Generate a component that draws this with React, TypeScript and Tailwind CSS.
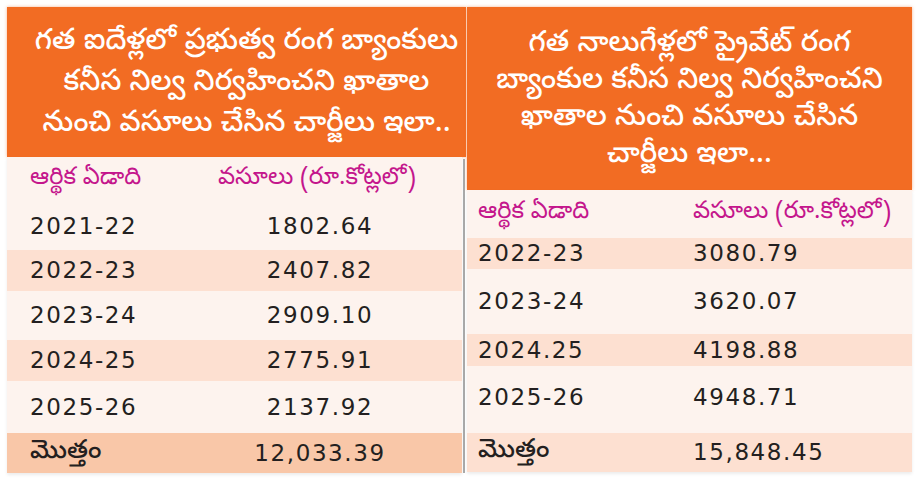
const teluguFont = "font-['Noto_Sans_Telugu','Noto_Sans','Lohit_Telugu','Pothana2000',sans-serif]";
const numFont = "font-['DejaVu_Sans','Noto_Sans_Telugu','Noto_Sans',sans-serif]";

type Row = { year: string; amount: string; h: string; tone: "light" | "peach" | "total" };

const leftRows: Row[] = [
  { year: "2021-22", amount: "1802.64", h: "h-[47px]", tone: "light" },
  { year: "2022-23", amount: "2407.82", h: "h-[41px]", tone: "peach" },
  { year: "2023-24", amount: "2909.10", h: "h-[49px]", tone: "light" },
  { year: "2024-25", amount: "2775.91", h: "h-[41px]", tone: "peach" },
  { year: "2025-26", amount: "2137.92", h: "h-[52px]", tone: "light" },
  { year: "మొత్తం", amount: "12,033.39", h: "h-[40px]", tone: "total" },
];

const rightRows: Row[] = [
  { year: "2022-23", amount: "3080.79", h: "h-[31px]", tone: "peach" },
  { year: "2023-24", amount: "3620.07", h: "h-[65px]", tone: "light" },
  { year: "2024.25", amount: "4198.88", h: "h-[32px]", tone: "peach" },
  { year: "2025-26", amount: "4948.71", h: "h-[67px] items-start pt-[14px]", tone: "light" },
  { year: "మొత్తం", amount: "15,848.45", h: "h-[39px]", tone: "peach" },
];

const toneBg = {
  light: "bg-[#fdf3ee]",
  peach: "bg-[#fde0d1]",
  total: "bg-[#f9c7a8]",
};

function Cell({ text }: { text: string }) {
  const isTelugu = /[\u0C00-\u0C7F]/.test(text);
  return (
    <span
      className={
        isTelugu
          ? `${teluguFont} text-[26px] font-medium text-[#231f20]`
          : `${numFont} text-[23px] tracking-[1.6px] text-[#231f20]`
      }
    >
      {text}
    </span>
  );
}

function LeftTable() {
  return (
    <div className="flex w-[459px] flex-col">
      <div className="flex h-[150px] flex-col items-center justify-center bg-[#f26c23] pl-[20px] pt-[5px] shadow-[0_0_3px_rgba(242,108,35,0.5)]">
        <p className={`${teluguFont} text-center text-[29px] font-medium leading-[41px] text-white`}>
          గత ఐదేళ్లలో ప్రభుత్వ రంగ బ్యాంకులు
          <br />
          కనీస నిల్వ నిర్వహించని ఖాతాల
          <br />
          నుంచి వసూలు చేసిన చార్జీలు ఇలా..
        </p>
      </div>
      <div className="flex">
        <div className="flex w-[455px] flex-col shadow-[0_2px_3px_rgba(0,0,0,0.08)]">
          <div className="flex h-[46px] items-center bg-[#fdf3ee]">
            <span className={`${teluguFont} w-[173px] pl-[23px] text-[24px] text-[#c4168c]`}>ఆర్థిక ఏడాది</span>
            <span className={`${teluguFont} flex-1 pr-[8px] text-center text-[24px] text-[#c4168c]`}>వసూలు (రూ.కోట్లలో)</span>
          </div>
          {leftRows.map((r) => (
            <div key={r.year} className={`flex items-center ${r.h} ${toneBg[r.tone]}`}>
              <div className="w-[173px] pl-[23px]">
                <Cell text={r.year} />
              </div>
              <div className="flex-1 pr-[2px] text-center">
                <Cell text={r.amount} />
              </div>
            </div>
          ))}
        </div>
        <div className="ml-[1px] mt-[2px] w-[2px] bg-[#a9a9a9]" />
      </div>
    </div>
  );
}

function RightTable() {
  return (
    <div className="ml-[1px] flex w-[445px] flex-col">
      <div className="flex h-[183px] flex-col items-center justify-center bg-[#f26c23] pt-[4px] shadow-[0_0_3px_rgba(242,108,35,0.5)]">
        <p className={`${teluguFont} text-center text-[29px] font-medium leading-[37px] text-white`}>
          గత నాలుగేళ్లలో ప్రైవేట్ రంగ
          <br />
          బ్యాంకుల కనీస నిల్వ నిర్వహించని
          <br />
          ఖాతాల నుంచి వసూలు చేసిన
          <br />
          చార్జీలు ఇలా...
        </p>
      </div>
      <div className="flex flex-col shadow-[0_2px_3px_rgba(0,0,0,0.08)]">
        <div className="flex h-[48px] items-center bg-[#fdf3ee]">
          <span className={`${teluguFont} w-[226px] pl-[11px] text-[24px] text-[#c4168c]`}>ఆర్థిక ఏడాది</span>
          <span className={`${teluguFont} text-[24px] text-[#c4168c]`}>వసూలు (రూ.కోట్లలో)</span>
        </div>
        {rightRows.map((r) => (
          <div key={r.year} className={`flex items-center ${r.h} ${toneBg[r.tone]}`}>
            <div className="w-[226px] pl-[11px]">
              <Cell text={r.year} />
            </div>
            <div>
              <Cell text={r.amount} />
            </div>
          </div>
        ))}
      </div>
    </div>
  );
}

export default function App() {
  return (
    <div className="h-[481px] w-[920px] overflow-hidden bg-white pl-[7px] pt-[7px]">
      <div className="flex items-start">
        <LeftTable />
        <RightTable />
      </div>
    </div>
  );
}
